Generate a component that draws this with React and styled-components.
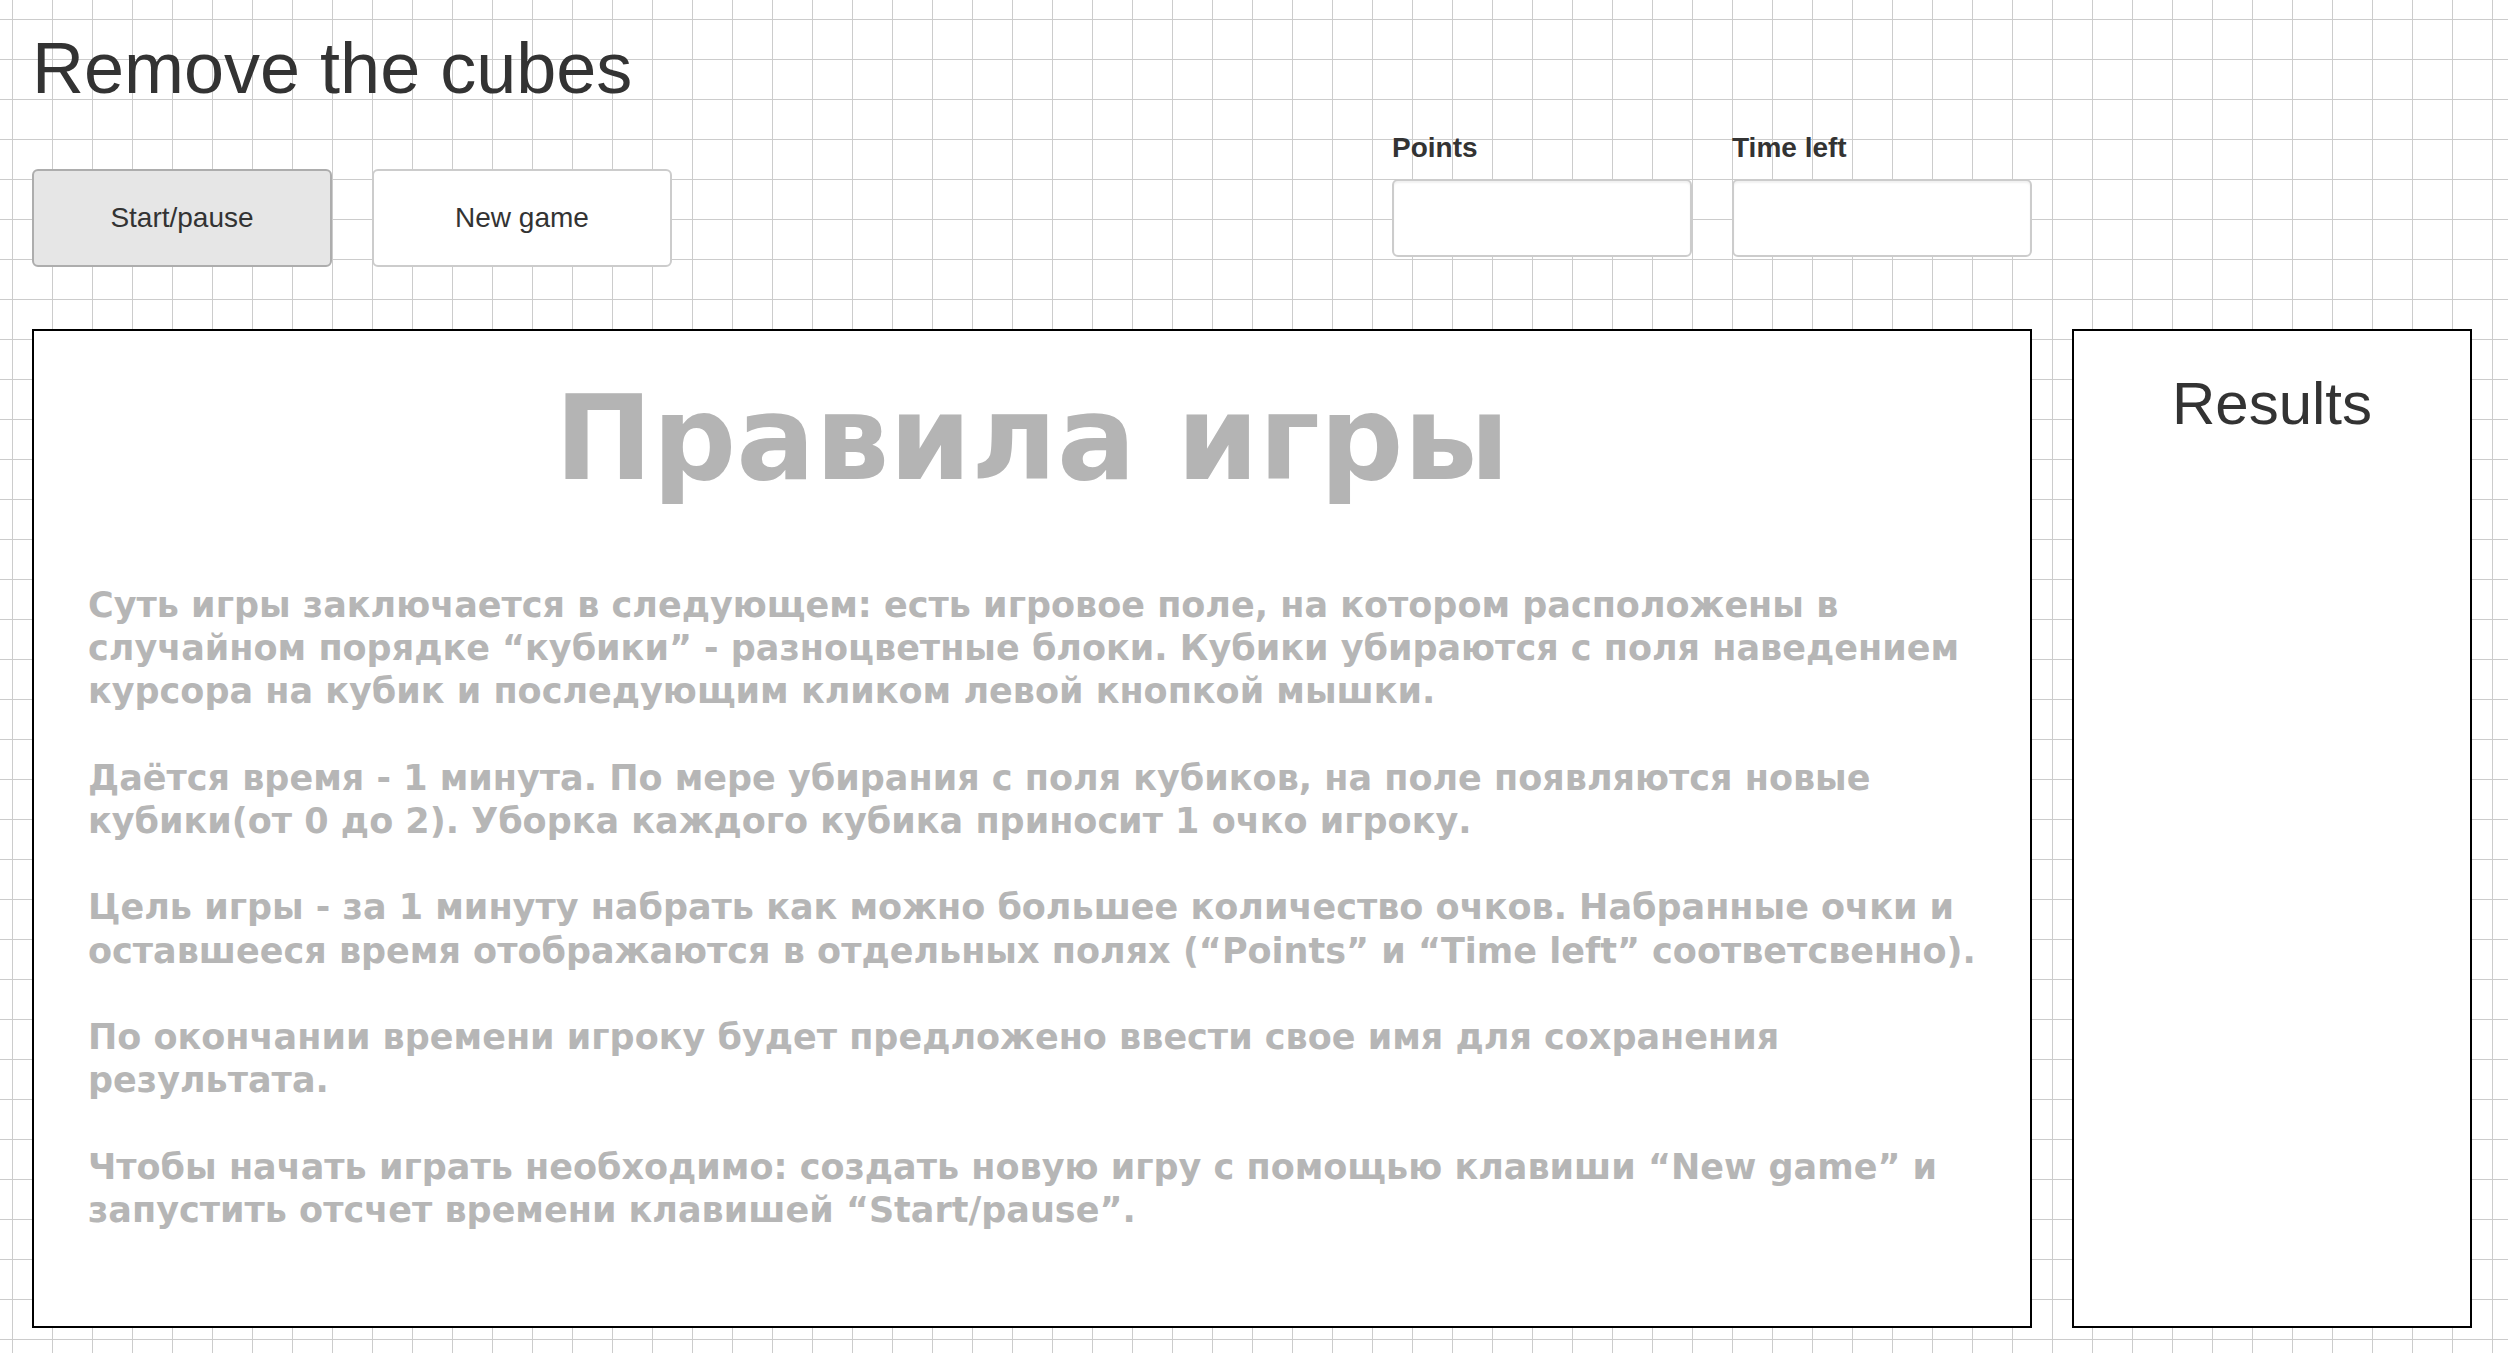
import React from "react";
import styled, { createGlobalStyle } from "styled-components";

const GlobalStyle = createGlobalStyle`
  html, body {
    margin: 0;
    min-height: 100%;
  }
  body {
    min-height: 1353px;
    font-family: "Liberation Sans", Arial, sans-serif;
    color: #333;
    background-color: #fff;
    background-image:
      linear-gradient(to right, #cccccc 1px, transparent 1px),
      linear-gradient(to bottom, #cccccc 1px, transparent 1px);
    background-size: 40px 40px;
    background-position: 12px 19px;
  }
`;

const Page = styled.div`
  padding: 27px 0 0 32px;
`;

const Title = styled.h1`
  margin: 0;
  font-size: 72px;
  font-weight: 400;
  line-height: 83px;
  color: #333;
`;

const Controls = styled.div`
  display: grid;
  grid-template-columns: repeat(6, 300px);
  column-gap: 40px;
  align-items: start;
  margin-top: 22px;
`;

const Button = styled.button`
  grid-column: ${(p) => p.$col};
  margin-top: 37px;
  height: 98px;
  border-radius: 6px;
  border: 2px solid ${(p) => (p.$active ? "#adadad" : "#cccccc")};
  background: ${(p) => (p.$active ? "#e6e6e6" : "#fff")};
  font-family: "Liberation Sans", Arial, sans-serif;
  font-size: 28px;
  color: #333;
  cursor: pointer;
`;

const Field = styled.div`
  grid-column: ${(p) => p.$col};
  display: flex;
  flex-direction: column;
`;

const Label = styled.label`
  font-size: 28px;
  font-weight: 700;
  line-height: 32px;
  color: #333;
  margin-bottom: 15px;
`;

const Input = styled.input`
  box-sizing: border-box;
  height: 78px;
  width: 100%;
  border: 2px solid #cccccc;
  border-radius: 6px;
  background: #fff;
  box-shadow: inset 0 2px 2px rgba(0, 0, 0, 0.06);
  font-size: 28px;
  padding: 0 18px;
`;

const Board = styled.div`
  display: flex;
  gap: 40px;
  margin-top: 62px;
`;

const Panel = styled.section`
  box-sizing: border-box;
  width: ${(p) => p.$width}px;
  height: 999px;
  border: 2px solid #000;
  background: #fff;
  padding-top: 38px;
`;

const RulesTitle = styled.h2`
  margin: 0;
  text-align: center;
  font-family: "DejaVu Sans", sans-serif;
  font-size: 117px;
  font-weight: 700;
  line-height: 140px;
  color: #b4b4b4;
`;

const Rules = styled.div`
  margin-top: 75px;
  padding: 0 40px 0 54px;
  font-family: "DejaVu Sans", sans-serif;
  font-weight: 700;
  font-size: 35px;
  line-height: 43.2px;
  color: #b6b6b6;

  p {
    margin: 0 0 43.2px;
  }
`;

const ResultsTitle = styled.h2`
  margin: 0;
  text-align: center;
  font-size: 60px;
  font-weight: 400;
  line-height: 69px;
  color: #333;
`;

const paragraphs = [
  "Суть игры заключается в следующем: есть игровое поле, на котором расположены в случайном порядке “кубики” - разноцветные блоки. Кубики убираются с поля наведением курсора на кубик и последующим кликом левой кнопкой мышки.",
  "Даётся время - 1 минута. По мере убирания с поля кубиков, на поле появляются новые кубики(от 0 до 2). Уборка каждого кубика приносит 1 очко игроку.",
  "Цель игры - за 1 минуту набрать как можно большее количество очков. Набранные очки и оставшееся время отображаются в отдельных полях (“Points” и “Time left” соответсвенно).",
  "По окончании времени игроку будет предложено ввести свое имя для сохранения результата.",
  "Чтобы начать играть необходимо: создать новую игру с помощью клавиши “New game” и запустить отсчет времени клавишей “Start/pause”.",
];

export default function App() {
  return (
    <>
      <GlobalStyle />
      <Page>
        <Title>Remove the cubes</Title>
        <Controls>
          <Button $col={1} $active>Start/pause</Button>
          <Button $col={2}>New game</Button>
          <Field $col={5}>
            <Label>Points</Label>
            <Input readOnly />
          </Field>
          <Field $col={6}>
            <Label>Time left</Label>
            <Input readOnly />
          </Field>
        </Controls>
        <Board>
          <Panel $width={2000}>
            <RulesTitle>Правила игры</RulesTitle>
            <Rules>
              {paragraphs.map((t, i) => (
                <p key={i}>{t}</p>
              ))}
            </Rules>
          </Panel>
          <Panel $width={400}>
            <ResultsTitle>Results</ResultsTitle>
          </Panel>
        </Board>
      </Page>
    </>
  );
}
